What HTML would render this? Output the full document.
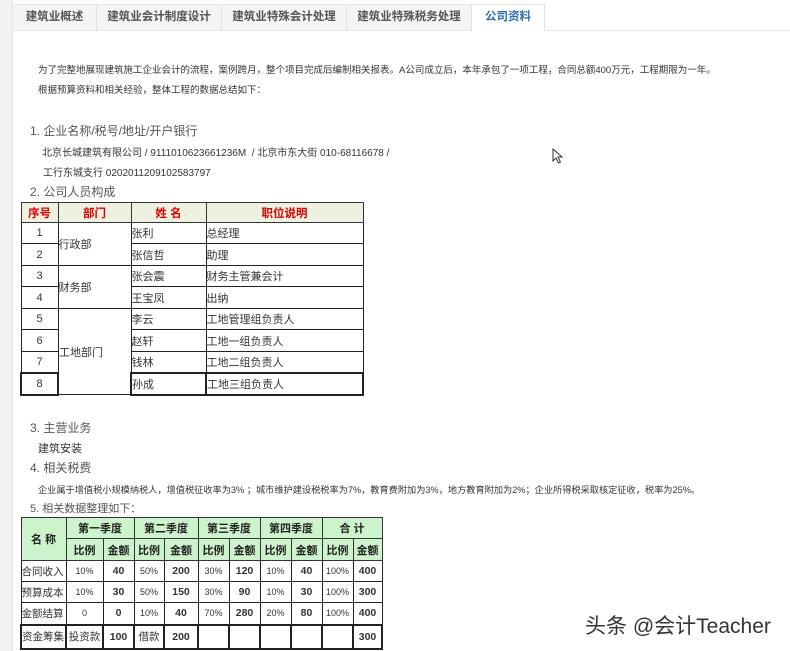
<!DOCTYPE html>
<html><head><meta charset="utf-8">
<style>
*{margin:0;padding:0;box-sizing:border-box}
body{width:790px;height:651px;background:#fff;position:relative;overflow:hidden;font-family:"Liberation Sans","Noto Sans CJK SC",sans-serif;color:#333}
.strip{position:absolute;left:0;top:0;width:13px;height:651px;background:#f2f2f2;border-right:1px solid #e4e4e4}
.tabs{position:absolute;left:13px;top:4px;width:458px;height:27px;background:#f4f4f4;border-top:1px solid #e6e6e6;border-bottom:1px solid #e6e6e6}
.tab{position:absolute;top:0;height:26px;line-height:25px;font-size:11.5px;font-weight:bold;color:#555;text-align:center;border-right:1px solid #e2e2e2}
.act{position:absolute;left:471px;top:4px;width:74px;height:27px;background:#fff;border:1px solid #e2e2e2;border-bottom:none;line-height:25px;text-align:center;font-size:11.5px;font-weight:bold;color:#2a6db0}
.line{position:absolute;left:545px;top:30px;width:245px;height:1px;background:#e6e6e6}
.t{position:absolute;white-space:nowrap;font-size:10.5px;color:#333}
.h{position:absolute;white-space:nowrap;font-size:12px;color:#555}
table{position:absolute;border-collapse:collapse;table-layout:fixed}
td{border:1px solid #222;font-size:11px;padding:0;white-space:nowrap;color:#333;overflow:hidden}
.t1 th{background:#eef0e0;color:#d00;font-size:11.5px;border:1px solid #333;font-weight:bold}
.t2 th{background:#ccf3cc;font-size:11px;border:1px solid #333;font-weight:bold;color:#222}
.t2 td{font-size:10.5px}
.c{text-align:center}
.b{font-weight:bold}
.wm{position:absolute;left:585px;top:610px;font-size:21px;color:#333;text-shadow:0 0 2px #fff,0 0 2px #fff;white-space:nowrap}
</style></head><body>
<div class="strip"></div>
<div class="tabs">
<div class="tab" style="left:0;width:84px">建筑业概述</div>
<div class="tab" style="left:84px;width:125px">建筑业会计制度设计</div>
<div class="tab" style="left:209px;width:125px">建筑业特殊会计处理</div>
<div class="tab" style="left:334px;width:124px;border-right:none">建筑业特殊税务处理</div>
</div>
<div class="act">公司资料</div>
<div class="line"></div>

<div class="t" style="left:38px;top:62px;font-size:9.5px">为了完整地展现建筑施工企业会计的流程，案例跨月，整个项目完成后编制相关报表。A公司成立后，本年承包了一项工程，合同总额400万元，工程期限为一年。</div>
<div class="t" style="left:38px;top:82px;font-size:9.5px">根据预算资料和相关经验，整体工程的数据总结如下：</div>
<div class="h" style="left:30px;top:122px">1. 企业名称/税号/地址/开户银行</div>
<div class="t" style="left:42px;top:144px;font-size:10px">北京长城建筑有限公司 / 9111010623661236M &nbsp;/ 北京市东大街 010-68116678 /</div>
<div class="t" style="left:43px;top:164px;font-size:10px">工行东城支行 0202011209102583797</div>
<div class="h" style="left:30px;top:183px">2. 公司人员构成</div>

<table class="t1" style="left:20px;top:202px;width:342px">
<colgroup><col style="width:37px"><col style="width:73px"><col style="width:75px"><col style="width:157px"></colgroup>
<tr style="height:20px"><th>序号</th><th>部门</th><th>姓 名</th><th>职位说明</th></tr>
<tr style="height:21px"><td class="c">1</td><td rowspan="2">行政部</td><td>张利</td><td>总经理</td></tr>
<tr style="height:22px"><td class="c">2</td><td>张信哲</td><td>助理</td></tr>
<tr style="height:21px"><td class="c">3</td><td rowspan="2">财务部</td><td>张会震</td><td>财务主管兼会计</td></tr>
<tr style="height:22px"><td class="c">4</td><td>王宝凤</td><td>出纳</td></tr>
<tr style="height:21px"><td class="c">5</td><td rowspan="4">工地部门</td><td>李云</td><td>工地管理组负责人</td></tr>
<tr style="height:22px"><td class="c">6</td><td>赵轩</td><td>工地一组负责人</td></tr>
<tr style="height:21px"><td class="c">7</td><td>钱林</td><td>工地二组负责人</td></tr>
<tr style="height:22px"><td class="c" style="border:2px solid #222">8</td><td style="border:2px solid #222">孙成</td><td style="border:2px solid #222">工地三组负责人</td></tr>
</table>

<div class="h" style="left:30px;top:419px">3. 主营业务</div>
<div class="t" style="left:38px;top:440px;font-size:11px">建筑安装</div>
<div class="h" style="left:30px;top:459px">4. 相关税费</div>
<div class="t" style="left:38px;top:482px;font-size:9.2px">企业属于增值税小规模纳税人，增值税征收率为3% ；城市维护建设税税率为7%，教育费附加为3%，地方教育附加为2%；企业所得税采取核定征收，税率为25%。</div>
<div class="h" style="left:30px;top:500px;font-size:11px">5. 相关数据整理如下：</div>

<table class="t2" style="left:20px;top:517px;width:361px">
<colgroup><col style="width:45px"><col style="width:37px"><col style="width:31px"><col style="width:30px"><col style="width:34px"><col style="width:31px"><col style="width:31px"><col style="width:31px"><col style="width:31px"><col style="width:31px"><col style="width:29px"></colgroup>
<tr style="height:21px"><th rowspan="2">名 称</th><th colspan="2">第一季度</th><th colspan="2">第二季度</th><th colspan="2">第三季度</th><th colspan="2">第四季度</th><th colspan="2">合 计</th></tr>
<tr style="height:22px"><th>比例</th><th>金额</th><th>比例</th><th>金额</th><th>比例</th><th>金额</th><th>比例</th><th>金额</th><th>比例</th><th>金额</th></tr>
<tr style="height:21px"><td>合同收入</td><td class="c" style="font-size:9px">10%</td><td class="c b">40</td><td class="c" style="font-size:9px">50%</td><td class="c b">200</td><td class="c" style="font-size:9px">30%</td><td class="c b">120</td><td class="c" style="font-size:9px">10%</td><td class="c b">40</td><td class="c" style="font-size:9px">100%</td><td class="c b">400</td></tr>
<tr style="height:21px"><td>预算成本</td><td class="c" style="font-size:9px">10%</td><td class="c b">30</td><td class="c" style="font-size:9px">50%</td><td class="c b">150</td><td class="c" style="font-size:9px">30%</td><td class="c b">90</td><td class="c" style="font-size:9px">10%</td><td class="c b">30</td><td class="c" style="font-size:9px">100%</td><td class="c b">300</td></tr>
<tr style="height:22px"><td>金额结算</td><td class="c" style="font-size:9px">0</td><td class="c b">0</td><td class="c" style="font-size:9px">10%</td><td class="c b">40</td><td class="c" style="font-size:9px">70%</td><td class="c b">280</td><td class="c" style="font-size:9px">20%</td><td class="c b">80</td><td class="c" style="font-size:9px">100%</td><td class="c b">400</td></tr>
<tr style="height:24px"><td style="border:2px solid #222">资金筹集</td><td class="c" style="border:2px solid #222">投资款</td><td class="c b" style="border:2px solid #222">100</td><td class="c" style="border:2px solid #222">借款</td><td class="c b" style="border:2px solid #222">200</td><td style="border:2px solid #222"></td><td style="border:2px solid #222"></td><td style="border:2px solid #222"></td><td style="border:2px solid #222"></td><td style="border:2px solid #222"></td><td class="c b" style="border:2px solid #222">300</td></tr>
</table>

<svg style="position:absolute;left:552px;top:148px" width="12" height="17" viewBox="0 0 12 17"><path d="M1 1 L1 13 L4 10 L6.5 15 L8.5 14 L6 9 L10 9 Z" fill="#fff" stroke="#333" stroke-width="1"/></svg>
<div class="wm">头条 @会计Teacher</div>
</body></html>
